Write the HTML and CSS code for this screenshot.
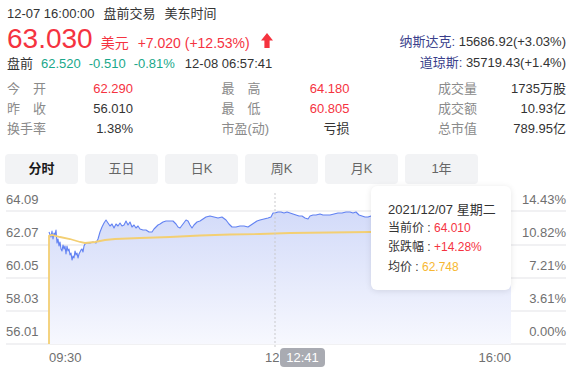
FILE: index.html
```html
<!DOCTYPE html>
<html lang="zh-CN">
<head>
  <meta charset="UTF-8">
  <meta name="viewport" content="width=device-width, initial-scale=1.0">
  <title>分时行情</title>
  <link rel="stylesheet" href="styles.css">
</head>
<body>
<div class="quote">
  <!-- 头部报价 -->
  <div class="head">
    <div class="head-left">
      <div class="meta">
        <span>12-07 16:00:00</span>
        <span>盘前交易</span>
        <span>美东时间</span>
      </div>
      <div class="price-row">
        <span class="price">63.030</span>
        <span class="unit">美元</span>
        <span class="chg">+7.020 (+12.53%)</span>
        <svg class="arrow" width="12" height="15" viewBox="0 0 12 15">
          <path d="M6 0 L12 7.5 L8.6 7.5 L8.6 15 L3.4 15 L3.4 7.5 L0 7.5 Z" fill="#f5333f"/>
        </svg>
      </div>
      <div class="pre">
        <span>盘前</span>
        <span class="green">62.520</span>
        <span class="green">-0.510</span>
        <span class="green">-0.81%</span>
        <span class="pre-time">12-08 06:57:41</span>
      </div>
    </div>
    <div class="head-right">
      <div class="idx"><span class="idx-name">纳斯达克:</span> 15686.92(+3.03%)</div>
      <div class="idx"><span class="idx-name">道琼斯:</span> 35719.43(+1.4%)</div>
    </div>
  </div>

  <!-- 统计数据 -->
  <div class="stats">
    <div class="stat"><span class="label">今　开</span><span class="val red">62.290</span></div>
    <div class="stat"><span class="label">最　高</span><span class="val red">64.180</span></div>
    <div class="stat"><span class="label">成交量</span><span class="val">1735万股</span></div>
    <div class="stat"><span class="label">昨　收</span><span class="val">56.010</span></div>
    <div class="stat"><span class="label">最　低</span><span class="val red">60.805</span></div>
    <div class="stat"><span class="label">成交额</span><span class="val">10.93亿</span></div>
    <div class="stat"><span class="label">换手率</span><span class="val">1.38%</span></div>
    <div class="stat"><span class="label">市盈(动)</span><span class="val">亏损</span></div>
    <div class="stat"><span class="label">总市值</span><span class="val">789.95亿</span></div>
  </div>

  <!-- 周期切换 -->
  <div class="tabs">
    <div class="tab active">分时</div>
    <div class="tab">五日</div>
    <div class="tab">日K</div>
    <div class="tab">周K</div>
    <div class="tab">月K</div>
    <div class="tab">1年</div>
  </div>

  <!-- 分时图 -->
  <div class="chart">
    <svg class="chart-svg" width="574" height="184" viewBox="0 185 574 184">
      <defs>
        <linearGradient id="area" x1="0" y1="0" x2="0" y2="1">
          <stop offset="0" stop-color="#d3dbf9"/>
          <stop offset="1" stop-color="#f7f8fe"/>
        </linearGradient>
      </defs>
      <g stroke="#f1f1f3" stroke-width="2">
        <line x1="6" y1="212" x2="566" y2="212"/>
        <line x1="6" y1="246" x2="566" y2="246"/>
        <line x1="6" y1="279" x2="566" y2="279"/>
        <line x1="6" y1="312" x2="566" y2="312"/>
        <line x1="6" y1="345" x2="566" y2="345"/>
      </g>
      <path id="area-path" fill="url(#area)" d=""/>
      <path id="price-path" fill="none" stroke="#6282f2" stroke-width="1.1" stroke-linejoin="round" d=""/>
      <path fill="none" stroke="#f3cf73" stroke-width="1.8"
            d="M49,345 L49,237 L52,236 L60,238 L70,240 L80,243 L85,244 L95,243 L105,241 L115,240 L140,239 L170,238 L200,236.5 L230,235.5 L260,235 L290,234 L330,233.5 L370,233 L420,232.5 L511,232"/>
      <line x1="275" y1="194" x2="275" y2="349" stroke="#c9c9cc" stroke-width="1" stroke-dasharray="2 2"/>
      <g class="axis">
        <text x="6" y="205">64.09</text>
        <text x="6" y="238">62.07</text>
        <text x="6" y="271">60.05</text>
        <text x="6" y="304">58.03</text>
        <text x="6" y="337">56.01</text>
        <text x="566" y="205" text-anchor="end">14.43%</text>
        <text x="566" y="238" text-anchor="end">10.82%</text>
        <text x="566" y="271" text-anchor="end">7.21%</text>
        <text x="566" y="304" text-anchor="end">3.61%</text>
        <text x="566" y="337" text-anchor="end">0.00%</text>
        <text x="49" y="363">09:30</text>
        <text x="265" y="363">12:30</text>
        <text x="511" y="363" text-anchor="end">16:00</text>
      </g>
    </svg>

    <div class="cross-time">12:41</div>

    <div class="tooltip">
      <div class="tip-date">2021/12/07 星期二</div>
      <div class="tip-row">当前价 : <span class="red">64.010</span></div>
      <div class="tip-row">张跌幅 : <span class="red">+14.28%</span></div>
      <div class="tip-row">均价 : <span class="orange">62.748</span></div>
    </div>
  </div>
</div>

<script>
  // 分时价格点 (x, y)
  const points = [
    [49,233],[51,238],[52,232],[53,240],[54,234],[55,236],[56,231],[57,244],[58,240],[59,247],
    [60,243],[61,250],[62,252],[63,246],[64,250],[65,247],[66,255],[67,247],[68,252],[69,250],
    [70,256],[71,254],[72,261],[73,257],[74,259],[75,252],[76,256],[77,254],[78,259],[79,255],
    [80,253],[81,251],[82,250],[83,253],[84,247],[85,245],[87,244],[90,244],[93,243],[96,244],
    [98,240],[100,233],[102,228],[104,224],[106,221],[108,224],[110,227],[112,225],[114,229],
    [116,225],[118,227],[120,224],[122,227],[124,226],[126,222],[128,226],[130,223],[132,228],
    [134,226],[136,229],[138,227],[140,230],[143,231],[146,231],[149,233],[152,233],[154,230],
    [156,228],[158,226],[160,225],[163,223],[166,222],[170,222],[173,222],[176,225],[178,228],
    [180,229],[183,225],[186,221],[188,222],[190,226],[192,229],[194,226],[197,223],[200,222],
    [203,220],[206,218],[210,217],[214,218],[218,219],[222,218],[226,221],[229,225],[232,228],
    [236,228],[240,227],[244,227],[248,228],[251,226],[254,224],[257,222],[260,221],[264,220],
    [268,219],[271,218],[273,214],[275,214],[278,213],[281,213],[284,214],[287,213],[290,214],
    [293,215],[296,216],[299,217],[302,217],[305,219],[308,220],[310,217],[313,216],[316,216],
    [320,215],[323,216],[326,216],[330,216],[334,215],[338,214],[342,214],[346,213],[350,213],
    [353,214],[356,213],[359,216],[362,217],[365,218],[368,218],[371,217],[390,218],[420,216],
    [450,217],[480,216],[511,217]
  ];

  const line = points.map((p, i) => (i === 0 ? 'M' : 'L') + p[0] + ',' + p[1]).join(' ');
  document.getElementById('price-path').setAttribute('d', line);
  document.getElementById('area-path').setAttribute('d', 'M49,345 L' + line.slice(1) + ' L511,345 Z');
</script>
</body>
</html>
```

FILE: styles.css
```css
body {
  margin: 0;
  background: #ffffff;
  font-family: "Liberation Sans", "Noto Sans CJK SC", sans-serif;
  color: #333333;
}

.quote {
  width: 574px;
}

.red {
  color: #f5333f;
}

.green {
  color: #1aa88a;
}

.orange {
  color: #f7b731;
}

/* 头部 */
.head {
  display: flex;
  justify-content: space-between;
  align-items: flex-end;
  padding: 5px 8px 0 7px;
}

.meta {
  display: flex;
  gap: 9px;
  font-size: 13px;
  line-height: 18px;
}

.price-row {
  display: flex;
  align-items: baseline;
  height: 32px;
  line-height: 32px;
  color: #f5333f;
}

.price {
  font-size: 28px;
  margin-right: 8px;
}

.unit,
.chg {
  font-size: 14px;
}

.unit {
  margin-right: 9px;
}

.arrow {
  align-self: center;
  margin-left: 11px;
  margin-top: 2px;
}

.pre {
  display: flex;
  gap: 8px;
  font-size: 13px;
  line-height: 18px;
}

.pre-time {
  margin-left: 2px;
}

.head-right {
  text-align: right;
  font-size: 13px;
  line-height: 21px;
  padding-bottom: 0;
}

.idx-name {
  color: #3a3f8c;
}

/* 统计 */
.stats {
  display: grid;
  grid-template-columns: 126px 128px 128px;
  justify-content: space-between;
  padding: 6px 8px 0 7px;
  font-size: 13px;
}

.stat {
  display: flex;
  justify-content: space-between;
  line-height: 20px;
}

.stat .label {
  color: #8a8a8a;
}

/* 周期切换 */
.tabs {
  display: flex;
  gap: 7px;
  padding: 15px 0 0 5px;
}

.tab {
  width: 73px;
  height: 30px;
  line-height: 30px;
  text-align: center;
  font-size: 13px;
  color: #666666;
  background: #f2f3f5;
  border-radius: 4px;
}

.tab.active {
  color: #1a1a1a;
  font-weight: bold;
}

/* 分时图 */
.chart {
  position: relative;
  height: 184px;
}

.chart-svg {
  display: block;
}

.axis text {
  font-family: "Liberation Sans", sans-serif;
  font-size: 13px;
  fill: #707070;
}

.cross-time {
  position: absolute;
  left: 280px;
  top: 164px;
  width: 45px;
  height: 19px;
  line-height: 19px;
  text-align: center;
  font-size: 13px;
  color: #ffffff;
  background: #a9abb2;
  border-radius: 4px;
}

.tooltip {
  position: absolute;
  left: 371px;
  top: 2px;
  width: 123px;
  height: 90px;
  padding: 14px 0 0 17px;
  background: #ffffff;
  border-radius: 6px;
  box-shadow: 0 1px 6px rgba(0, 0, 0, 0.1);
  color: #333333;
}

.tip-date {
  font-size: 13px;
  line-height: 19px;
}

.tip-row {
  font-size: 12px;
  line-height: 19.3px;
}
```
